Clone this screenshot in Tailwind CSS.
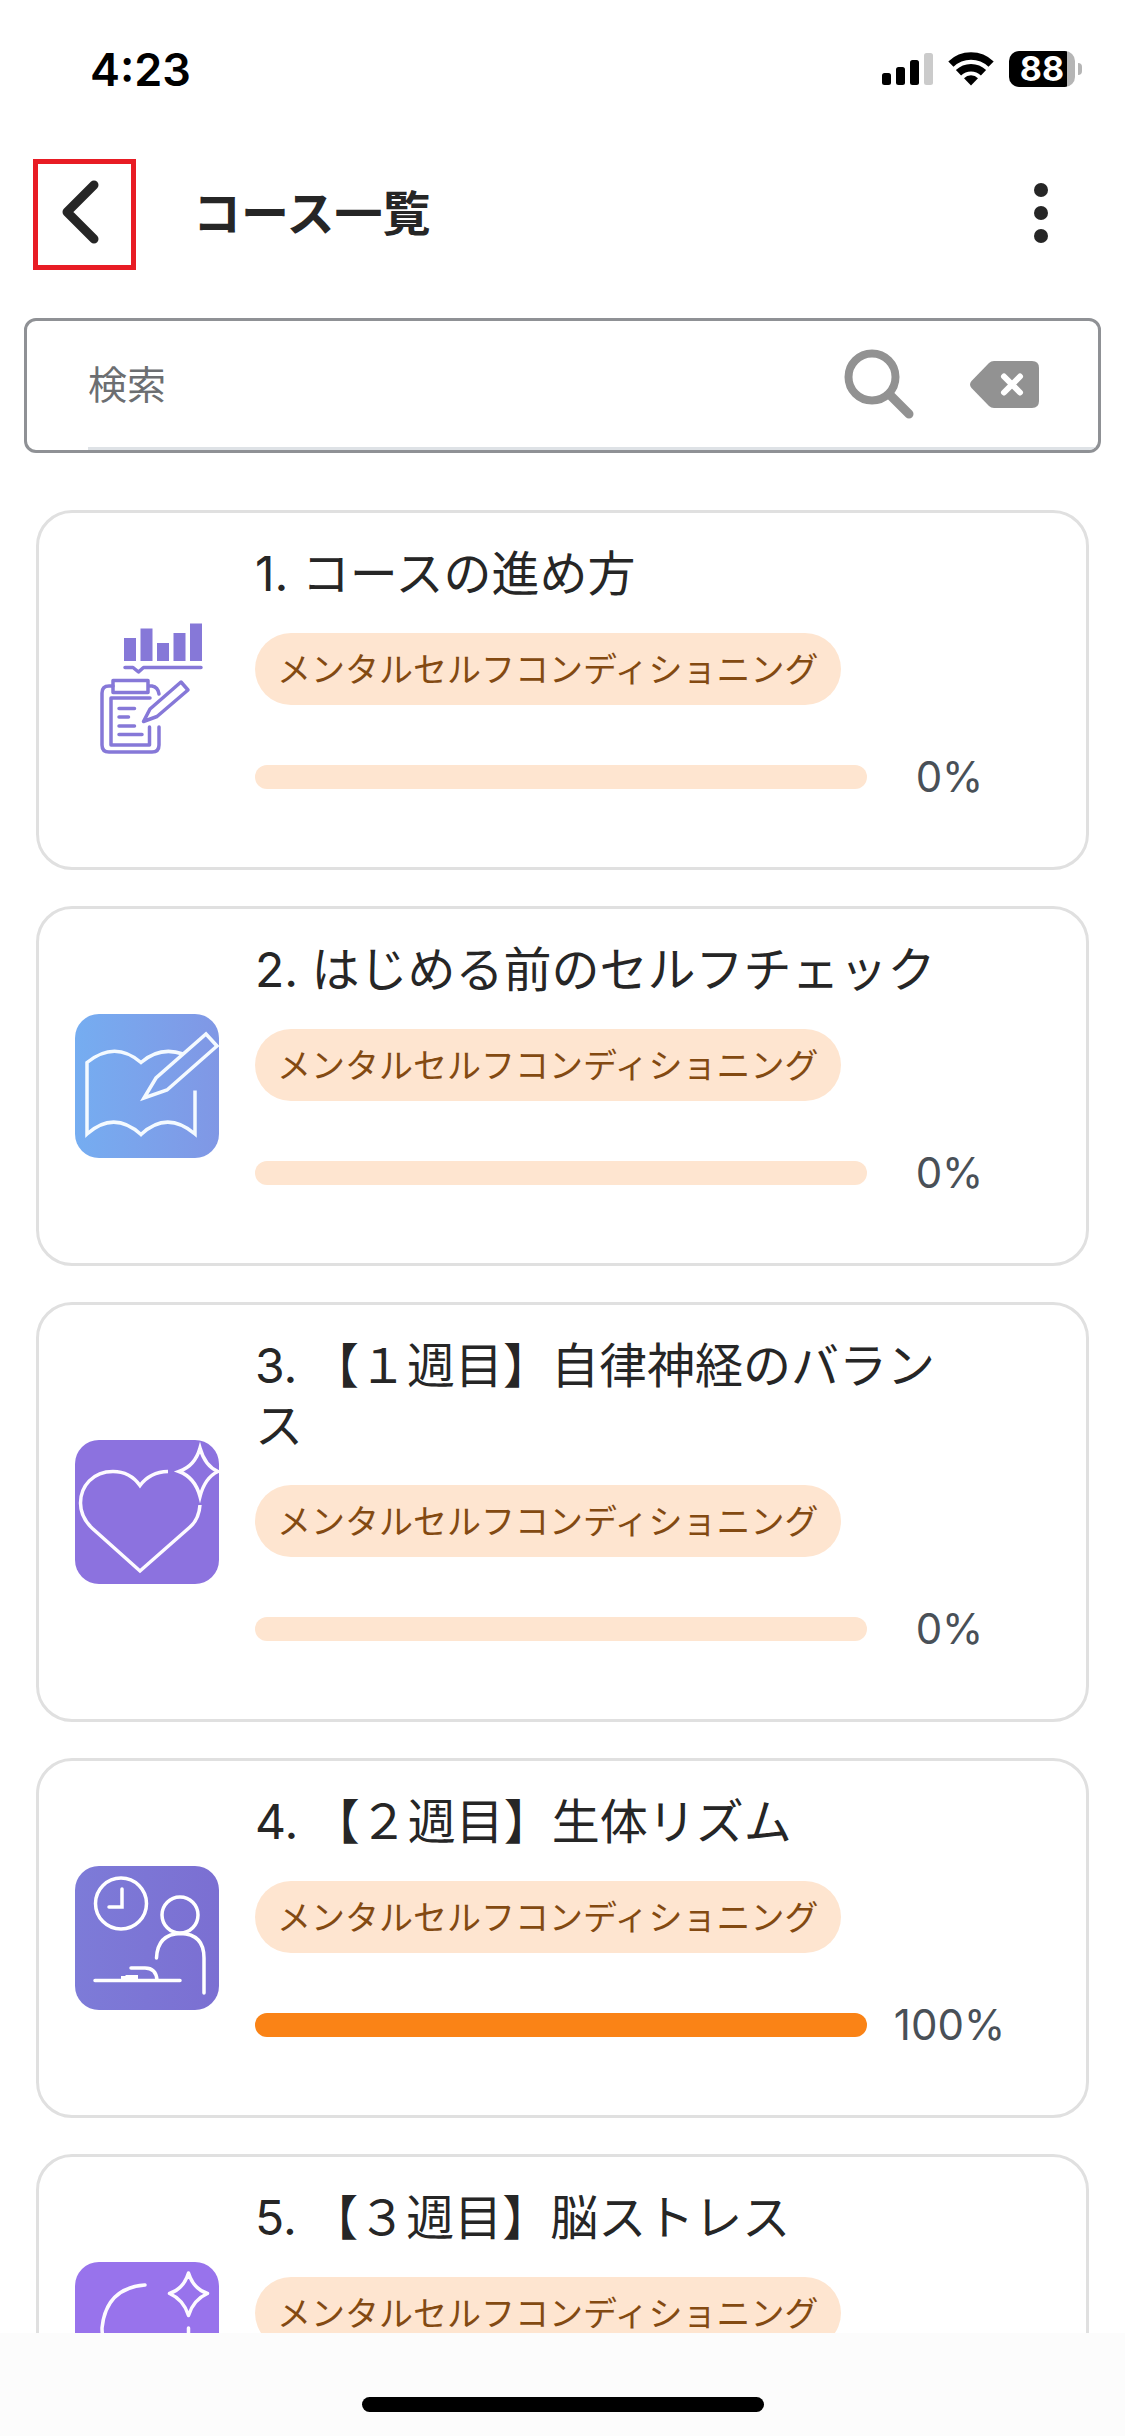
<!DOCTYPE html>
<html lang="ja">
<head>
  <meta charset="UTF-8" />
  <meta name="viewport" content="width=device-width, initial-scale=1" />
  <title>コース一覧</title>
  <script src="https://cdn.jsdelivr.net/npm/@tailwindcss/browser@4"></script>
</head>
<body class="bg-white h-screen flex flex-col text-[#262626] font-[Inter,'Noto_Sans_CJK_JP',sans-serif]">

  <!-- Status bar -->
  <div class="h-[138px] shrink-0 flex items-center justify-between pl-[90px] pr-[43px] text-black">
    <span class="text-[45px] leading-none font-semibold">4:23</span>
    <div class="flex items-center gap-[15px]">
      <svg class="w-[51px] h-[34px]" viewBox="0 0 51 34">
        <rect x="0" y="21" width="9" height="12" rx="2.5" />
        <rect x="14" y="15" width="9" height="18" rx="2.5" />
        <rect x="28" y="8" width="9" height="25" rx="2.5" />
        <rect x="42" y="1" width="9" height="32" rx="2.5" fill="#cbcbcb" />
      </svg>
      <svg class="w-[46px] h-[36px]" viewBox="0 0 46 36" fill="none" stroke="#000" stroke-width="7.5">
        <path d="M2.9 13.1a29 29 0 0 1 40.2 0" />
        <path d="M10.5 21.8a18 18 0 0 1 25 0" />
        <path d="M16 27.2a10 10 0 0 1 14 0L23 34.6z" fill="#000" stroke="none" />
      </svg>
      <div class="flex items-center gap-[3px]">
        <span class="w-[66px] h-[36px] rounded-[10px] bg-linear-to-r from-black from-88% to-[#b5b5b5] to-88% text-white text-[34px] leading-[36px] font-bold text-center">88</span>
        <span class="w-[4px] h-[12px] rounded-r-full bg-[#b5b5b5]"></span>
      </div>
    </div>
  </div>

  <!-- Header -->
  <header class="h-[152px] shrink-0 flex items-center pl-[33px] pr-[72px]">
    <button type="button" aria-label="戻る" class="w-[103px] h-[111px] border-5 border-[#e81c24] flex items-center justify-center">
      <svg class="w-[48px] h-[68px]" viewBox="0 0 48 68" fill="none" stroke="#262626" stroke-width="9" stroke-linecap="round" stroke-linejoin="round">
        <path d="M33 5L6 32l27 27" />
      </svg>
    </button>
    <h1 class="ml-[57px] text-[48px] leading-[60px] font-bold flex-1">コース一覧</h1>
    <button type="button" aria-label="メニュー" class="w-[24px] h-[64px]">
      <svg class="w-[24px] h-[64px]" viewBox="0 0 24 64" fill="#262626">
        <circle cx="12" cy="8" r="7" />
        <circle cx="12" cy="31" r="7" />
        <circle cx="12" cy="54" r="7" />
      </svg>
    </button>
  </header>

  <main class="flex-1 min-h-0 overflow-y-auto [scrollbar-width:none] pt-7">

    <!-- Search -->
    <form class="mx-[24px] h-[135px] border-3 border-[#8f9195] rounded-[12px] pl-[61px] flex overflow-hidden">
      <div class="flex-1 flex items-center border-b-3 border-[#dee2e6] pr-[58px]">
        <input type="search" aria-label="検索" placeholder="検索" class="flex-1 min-w-0 h-full text-[39px] outline-none placeholder:text-[#6c6e71]" />
        <button type="submit" aria-label="検索する">
          <svg class="w-[70px] h-[70px]" viewBox="0 0 70 70" fill="none" stroke="#929292">
            <circle cx="28" cy="28" r="23.5" stroke-width="8" />
            <path d="M46 46L65 65" stroke-width="9" stroke-linecap="round" />
          </svg>
        </button>
        <button type="reset" aria-label="クリア" class="ml-[56px]">
          <svg class="w-[70px] h-[47px]" viewBox="0 0 70 47">
            <path d="M24 0h38q7 0 7 7v33q0 7-7 7H24q-3 0-5-2L1.500 27q-3-3.500 0-7L19 2q2-2 5-2z" fill="#929292" />
            <path d="M34 15.500l16 16M50 15.500l-16 16" stroke="#fff" stroke-width="6" stroke-linecap="round" />
          </svg>
        </button>
      </div>
    </form>

    <!-- Course list -->
    <ul class="mt-[57px] mx-[36px] pb-9 flex flex-col gap-9">

      <li class="flex items-center border-3 border-[#e0e0e0] rounded-[36px] pl-[36px] pr-[54px]">
        <svg class="w-[144px] h-[144px] shrink-0" viewBox="0 0 144 144" fill="none" stroke="#8678d8" stroke-width="3.500" stroke-linecap="round" stroke-linejoin="round">
          <path d="M49 20h12v23H49zM65.500 10.500h12V43h-12zM82 25h12v18H82zM98.500 15h12v28h-12zM115 5.500h12V43h-12z" fill="#8678d8" stroke="none" />
          <path d="M50 49.500h8l5.500 4.500 5-4.500H126" />
          <path d="M38 68h-4q-7 0-7 7v52q0 7 7 7h43q7 0 7-7v-18M74 68h3q6 1 7 8" />
          <path d="M38 62.500h35v12H38z" />
          <path d="M75 80H36v47h38.500v-18" />
          <path d="M44 90.500h15.500M44 99h9.500M44 108h15.500M44 116.500h23" />
          <path d="M68.500 103.500L75 91l31-27 7 8-31 26.500z" />
        </svg>
        <div class="flex-1 ml-[36px] pt-[31px] pb-[60px]">
          <h2 class="text-[48px] leading-[60px] pr-[80px]">1. コースの進め方</h2>
          <span class="mt-[29px] block w-fit h-[72px] leading-[74px] px-[22px] rounded-full bg-[#fee5d0] text-[#834a12] text-[34px]">メンタルセルフコンディショニング</span>
          <div class="mt-[42px] flex items-center">
            <div role="progressbar" aria-valuenow="0" class="flex-1 h-[24px] rounded-full bg-[#fee5d0] overflow-hidden">
              <div class="h-full bg-[#fa8316]" style="width: 0%"></div>
            </div>
            <span class="w-[165px] text-center text-[42px] leading-[60px] text-[#495057]">0%</span>
          </div>
        </div>
      </li>

      <li class="flex items-center border-3 border-[#e0e0e0] rounded-[36px] pl-[36px] pr-[54px]">
        <svg class="w-[144px] h-[144px] shrink-0 rounded-[24px] bg-linear-to-r from-[#75adf1] to-[#8097e5]" viewBox="0 0 144 144" fill="none" stroke="#f4faff" stroke-width="3.500">
          <path d="M120 76.500V120Q92 96 66 120.500 39 96 12 120V48.500Q40 26 66 48.500 85 32 108 40" />
          <path d="M69 84l12-20 50-44 11 12-50 44z" />
        </svg>
        <div class="flex-1 ml-[36px] pt-[31px] pb-[60px]">
          <h2 class="text-[48px] leading-[60px] pr-[80px]">2. はじめる前のセルフチェック</h2>
          <span class="mt-[29px] block w-fit h-[72px] leading-[74px] px-[22px] rounded-full bg-[#fee5d0] text-[#834a12] text-[34px]">メンタルセルフコンディショニング</span>
          <div class="mt-[42px] flex items-center">
            <div role="progressbar" aria-valuenow="0" class="flex-1 h-[24px] rounded-full bg-[#fee5d0] overflow-hidden">
              <div class="h-full bg-[#fa8316]" style="width: 0%"></div>
            </div>
            <span class="w-[165px] text-center text-[42px] leading-[60px] text-[#495057]">0%</span>
          </div>
        </div>
      </li>

      <li class="flex items-center border-3 border-[#e0e0e0] rounded-[36px] pl-[36px] pr-[54px]">
        <svg class="w-[144px] h-[144px] shrink-0 rounded-[24px] bg-[#8c72df]" viewBox="0 0 144 144" fill="none" stroke="#fdfaff" stroke-width="3.500">
          <path d="M93 31.500Q75 32 65 45.500 55 31.500 38 31.500C18 31.500 5.500 46 5.500 63c0 10 4 18 12 25.500L65 131l50-44q9-8 10-22" />
          <path d="M125 8q5 18 18 23.500-13 6-18 25-5-19-21-25 16-5.500 21-23.500z" />
        </svg>
        <div class="flex-1 ml-[36px] pt-[31px] pb-[60px]">
          <h2 class="text-[48px] leading-[60px] pr-[80px]">3. 【１週目】自律神経のバランス</h2>
          <span class="mt-[29px] block w-fit h-[72px] leading-[74px] px-[22px] rounded-full bg-[#fee5d0] text-[#834a12] text-[34px]">メンタルセルフコンディショニング</span>
          <div class="mt-[42px] flex items-center">
            <div role="progressbar" aria-valuenow="0" class="flex-1 h-[24px] rounded-full bg-[#fee5d0] overflow-hidden">
              <div class="h-full bg-[#fa8316]" style="width: 0%"></div>
            </div>
            <span class="w-[165px] text-center text-[42px] leading-[60px] text-[#495057]">0%</span>
          </div>
        </div>
      </li>

      <li class="flex items-center border-3 border-[#e0e0e0] rounded-[36px] pl-[36px] pr-[54px]">
        <svg class="w-[144px] h-[144px] shrink-0 rounded-[24px] bg-linear-to-r from-[#7d7bd8] to-[#7b6fd2]" viewBox="0 0 144 144" fill="none" stroke="#fff" stroke-width="3.500" stroke-linecap="round">
          <circle cx="46" cy="37.500" r="25.500" />
          <path d="M47 23v18H34" />
          <circle cx="105" cy="49" r="18" />
          <path d="M81.500 92q1-24 24-24.500Q129 68 129 92v35" />
          <path d="M20 114.500h85M56 102h14q11 0 12 12" />
          <path d="M46 114v-4h4l1-1h12v5z" fill="#fff" stroke="none" />
        </svg>
        <div class="flex-1 ml-[36px] pt-[31px] pb-[60px]">
          <h2 class="text-[48px] leading-[60px] pr-[80px]">4. 【２週目】生体リズム</h2>
          <span class="mt-[29px] block w-fit h-[72px] leading-[74px] px-[22px] rounded-full bg-[#fee5d0] text-[#834a12] text-[34px]">メンタルセルフコンディショニング</span>
          <div class="mt-[42px] flex items-center">
            <div role="progressbar" aria-valuenow="100" class="flex-1 h-[24px] rounded-full bg-[#fee5d0] overflow-hidden">
              <div class="h-full bg-[#fa8316]" style="width: 100%"></div>
            </div>
            <span class="w-[165px] text-center text-[42px] leading-[60px] text-[#495057]">100%</span>
          </div>
        </div>
      </li>

      <li class="flex items-center border-3 border-[#e0e0e0] rounded-[36px] pl-[36px] pr-[54px]">
        <svg class="w-[144px] h-[144px] shrink-0 rounded-[24px] bg-[#9873ec]" viewBox="0 0 144 144" fill="none" stroke="#fdfaff" stroke-width="3.500" stroke-linecap="round" stroke-linejoin="round">
          <path d="M70 23Q31 26 27 66q0 12 6 24v32M113.500 66v22q0 12-12 12H92v22" />
          <path d="M113.500 11q5 16 19 20.500-14 6-19 22-5-16-19-22 14-4.500 19-20.500z" />
        </svg>
        <div class="flex-1 ml-[36px] pt-[31px] pb-[60px]">
          <h2 class="text-[48px] leading-[60px] pr-[80px]">5. 【３週目】脳ストレス</h2>
          <span class="mt-[29px] block w-fit h-[72px] leading-[74px] px-[22px] rounded-full bg-[#fee5d0] text-[#834a12] text-[34px]">メンタルセルフコンディショニング</span>
          <div class="mt-[42px] flex items-center">
            <div role="progressbar" aria-valuenow="0" class="flex-1 h-[24px] rounded-full bg-[#fee5d0] overflow-hidden">
              <div class="h-full bg-[#fa8316]" style="width: 0%"></div>
            </div>
            <span class="w-[165px] text-center text-[42px] leading-[60px] text-[#495057]">0%</span>
          </div>
        </div>
      </li>

    </ul>
  </main>

  <!-- Home indicator -->
  <footer class="h-[103px] shrink-0 bg-[#fcfcfc] flex justify-center items-end pb-6">
    <div class="w-[402px] h-[15px] rounded-full bg-black"></div>
  </footer>

</body>
</html>
